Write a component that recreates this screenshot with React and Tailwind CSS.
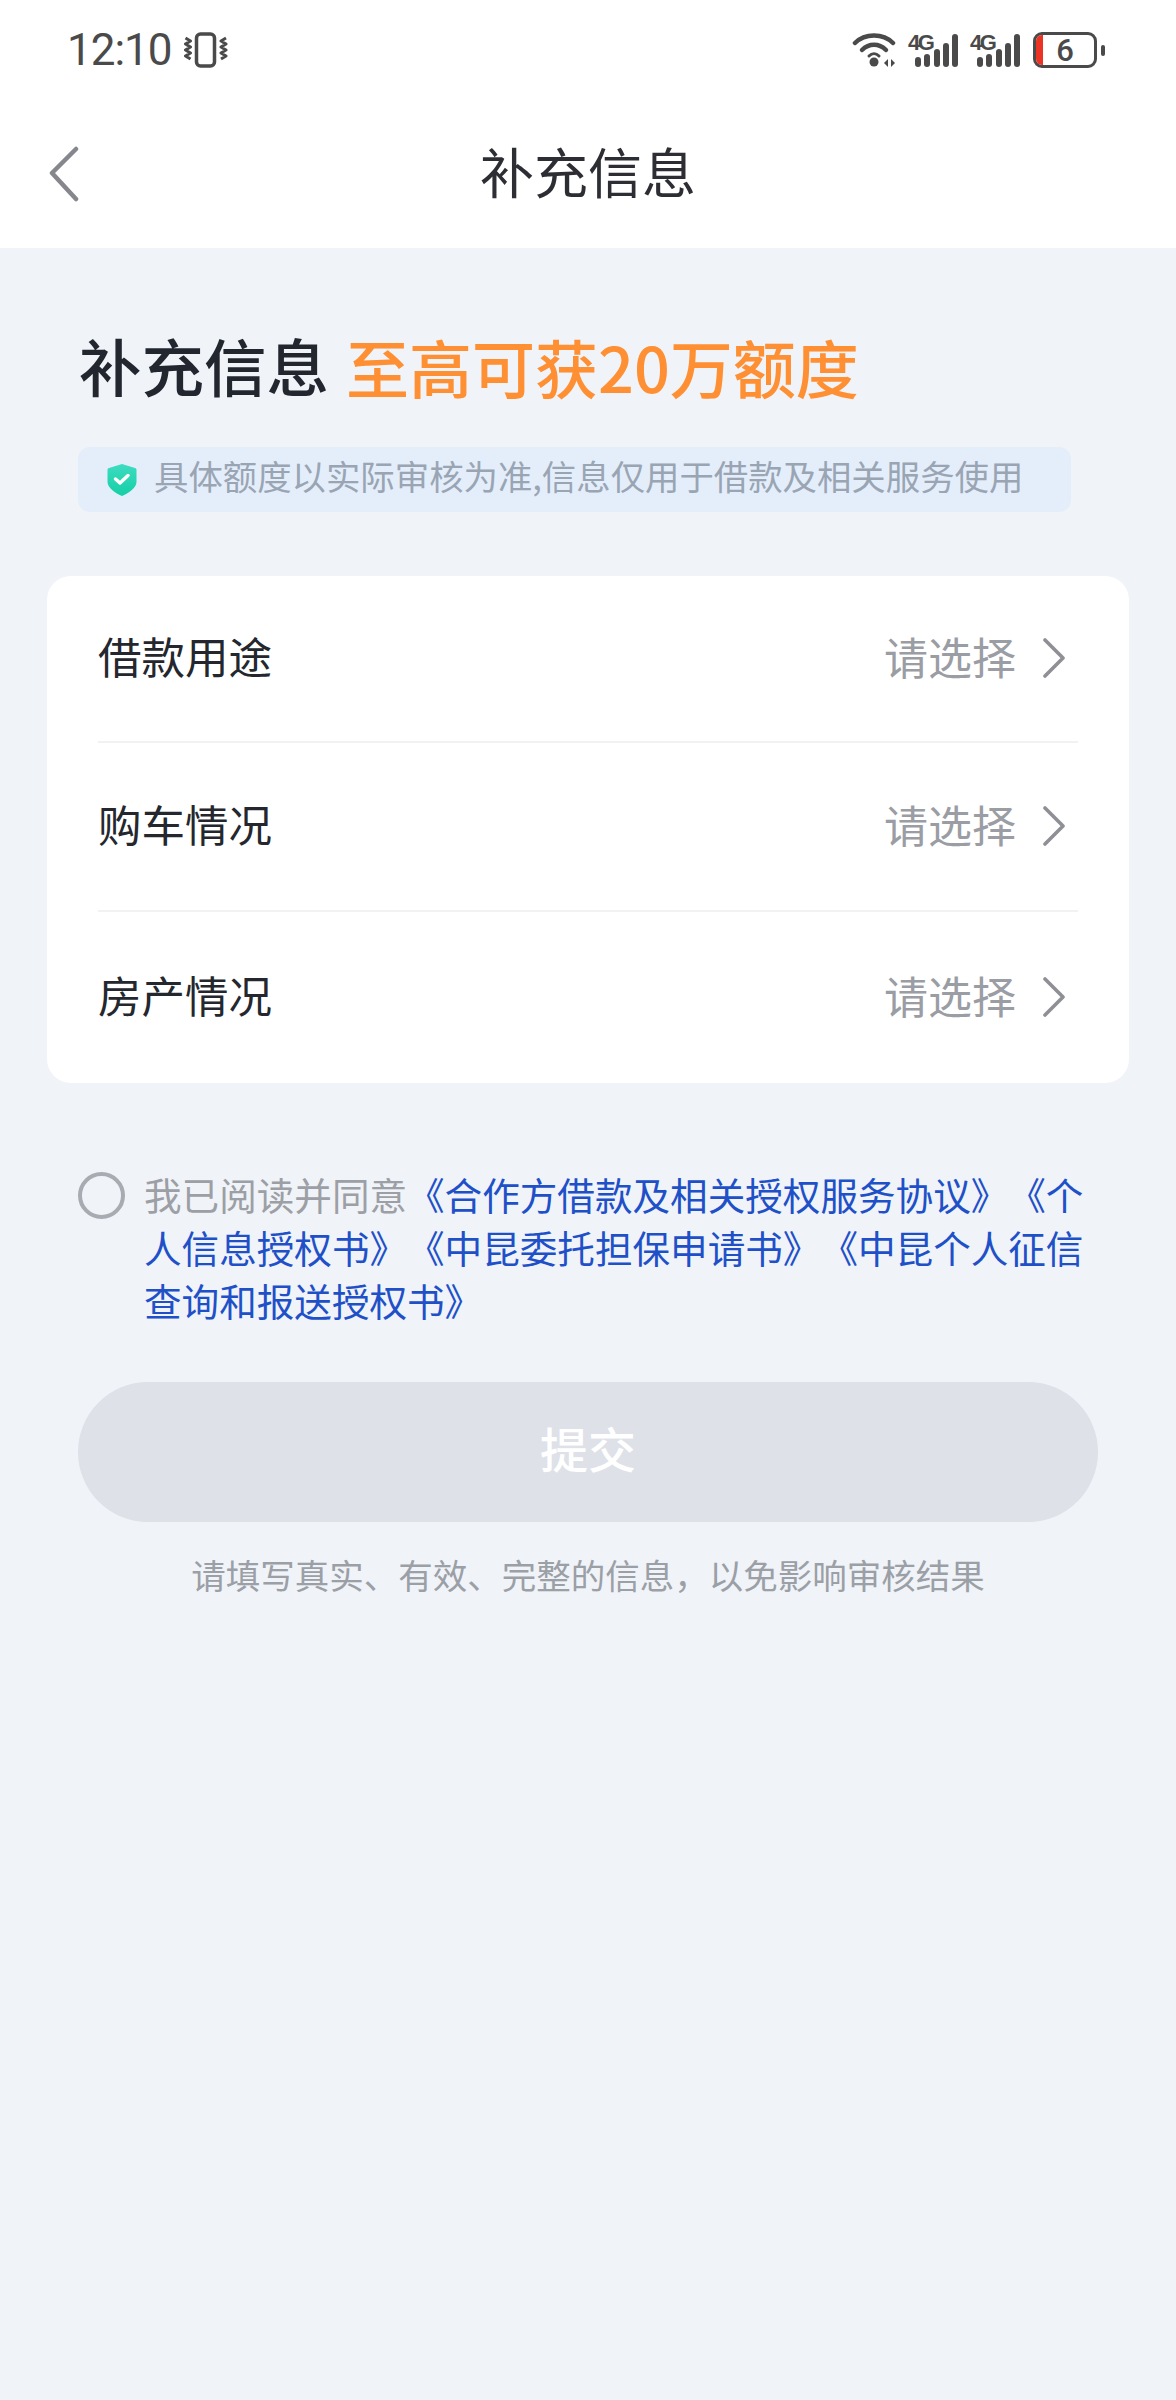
const cjk = "font-['Noto_Sans_CJK_SC','Noto_Sans',sans-serif]"

function Signal() {
  const bars = ["h-[10px]", "h-[13px]", "h-[18px]", "h-[24px]", "h-[33px]"]
  return (
    <div className="relative w-[50px] h-[33px]">
      <span className="absolute left-0 top-[-2px] text-[22px] leading-[22px] font-bold text-[#4a4a4a] font-['Liberation_Sans',sans-serif] tracking-[-2.500px]">
        4G
      </span>
      <div className="absolute left-[7px] bottom-0 flex items-end gap-[3.300px]">
        {bars.map((b, i) => (
          <span key={i} className={`block w-[6px] rounded-full bg-[#4a4a4a] ${b}`} />
        ))}
      </div>
    </div>
  )
}

function Row({ label, height }) {
  return (
    <div className={`flex items-center justify-between ${height}`}>
      <span className="mb-[6px] text-[43.500px] leading-none text-[#24272e]">{label}</span>
      <div className="flex items-center text-[#9a9da3]">
        <span className="mb-[6px] text-[44px] leading-none">请选择</span>
        <svg width="24" height="40" viewBox="0 0 24 40" fill="none" stroke="#8e9095" strokeWidth="3.600" strokeLinecap="round" strokeLinejoin="round" className="ml-[26px] mr-[12px] mb-[2px]">
          <path d="M3 2l18 18L3 38" />
        </svg>
      </div>
    </div>
  )
}

export default function App() {
  return (
    <div className={`w-[1176px] h-[2400px] bg-[#f0f3f8] ${cjk}`}>
      <div className="bg-white h-[248px]">
        <div className="h-[100px] flex items-center justify-between pl-[67px] pr-[71px]">
          <div className="flex items-center text-[#4a4a4a]">
            <span className="text-[44px] leading-none font-['Roboto',sans-serif] tracking-[-1px]">12:10</span>
            <svg width="44" height="36" viewBox="0 0 44 36" className="ml-[12px]" fill="none" stroke="#4a4a4a">
              <rect x="12.500" y="2" width="18" height="32" rx="4" strokeWidth="3.500" />
              <path d="M1.500 6l5 3-5 3 5 3-5 3 5 3-5 3 5 3" strokeWidth="3" strokeLinejoin="round" />
              <path d="M42 6l-5 3 5 3-5 3 5 3-5 3 5 3-5 3" strokeWidth="3" strokeLinejoin="round" />
            </svg>
          </div>
          <div className="flex items-center">
            <svg width="46" height="36" viewBox="0 0 46 36" fill="none" stroke="#4a4a4a" strokeWidth="4.500" strokeLinecap="round">
              <path d="M3 11C13 1 31 1 41 11" />
              <path d="M10 18C17 11 27 11 34 18" />
              <path d="M17 24C20 21 24 21 27 24" strokeWidth="3" />
              <circle cx="22" cy="30" r="4.500" fill="#4a4a4a" stroke="none" />
              <path d="M36 27l-4 4 4 4zM39 27l4 4-4 4z" fill="#4a4a4a" stroke="none" />
            </svg>
            <div className="ml-[10px]"><Signal /></div>
            <div className="ml-[12px]"><Signal /></div>
            <div className="ml-[13px] relative w-[64px] h-[36px] rounded-[9px] border-[3px] border-[#4a4a4a] overflow-hidden flex items-center justify-center">
              <span className="absolute left-0 top-0 bottom-0 w-[7px] bg-[#ea3323]" />
              <span className="text-[31px] leading-none font-medium text-[#4a4a4a] font-['Roboto',sans-serif]">6</span>
            </div>
            <span className="block ml-[4px] w-[4px] h-[11px] rounded-full bg-[#4a4a4a]" />
          </div>
        </div>
        <div className="h-[148px] grid grid-cols-[1fr_auto_1fr] items-center">
          <svg width="32" height="56" viewBox="0 0 32 56" fill="none" stroke="#85878d" strokeWidth="4.500" strokeLinecap="round" strokeLinejoin="round" className="ml-[48px]">
            <path d="M28 3L4 27l24 26" />
          </svg>
          <span className="mb-[6px] text-[54px] leading-none text-[#2c2e33]">补充信息</span>
        </div>
      </div>

      <div className="flex items-center pl-[79px] pt-[94px] h-[140px]">
        <span className="text-[62.500px] leading-none font-medium text-[#22262f]">补充信息</span>
        <span className="ml-[17px] text-[63px] leading-none font-medium text-[#ff8f33]">至高可获20万额度</span>
      </div>

      <div className="ml-[78px] mt-[59px] w-[993px] h-[65px] rounded-[12px] bg-[#e4eefb] flex items-center pl-[29px]">
        <svg width="30" height="34" viewBox="0 0 30 34">
          <defs>
            <linearGradient id="shield" x1="0" y1="0" x2="0" y2="1">
              <stop offset="0" stopColor="#3ddcc0" />
              <stop offset="1" stopColor="#14cfa6" />
            </linearGradient>
          </defs>
          <path d="M15 1l13 4c1 0 1.500 1 1.500 2v12c0 6-9 12-14.500 14C9.500 31 .5 25 .5 19V7c0-1 .5-2 1.500-2z" fill="url(#shield)" />
          <path d="M8.500 16l4.500 4 8-7.500" fill="none" stroke="white" strokeWidth="3.500" strokeLinecap="round" strokeLinejoin="round" />
        </svg>
        <span className="ml-[17px] mb-[8px] text-[34.400px] leading-none text-[#9aa5b4] whitespace-nowrap">具体额度以实际审核为准,信息仅用于借款及相关服务使用</span>
      </div>

      <div className="ml-[47px] mt-[64px] w-[1082px] h-[507px] rounded-[24px] bg-white px-[51px]">
        <div className="border-b-2 border-[#f1f2f4]"><Row label="借款用途" height="h-[165px]" /></div>
        <div className="border-b-2 border-[#f1f2f4]"><Row label="购车情况" height="h-[167px]" /></div>
        <Row label="房产情况" height="h-[171px]" />
      </div>

      <div className="flex mt-[84px] pl-[78px] pr-[60px]">
        <span className="block shrink-0 w-[47px] h-[47px] mt-[5px] rounded-full border-[4px] border-[#a8abb2]" />
        <p className="ml-[19px] text-[37.600px] leading-[53px] text-[#9c9fa5] [text-spacing-trim:space-all]">
          我已阅读并同意
          <span className="text-[#2050c8]">《合作方借款及相关授权服务协议》《个人信息授权书》《中昆委托担保申请书》《中昆个人征信查询和报送授权书》</span>
        </p>
      </div>

      <div className="ml-[78px] mt-[56px] w-[1020px] h-[140px] rounded-full bg-[#dee1e7] flex items-center justify-center">
        <span className="mb-[10px] text-[48px] leading-none font-medium text-white">提交</span>
      </div>

      <p className="mt-[35px] text-center text-[34.500px] leading-none text-[#9b9fa6] [text-spacing-trim:space-all]">请填写真实、有效、完整的信息，以免影响审核结果</p>
    </div>
  )
}
